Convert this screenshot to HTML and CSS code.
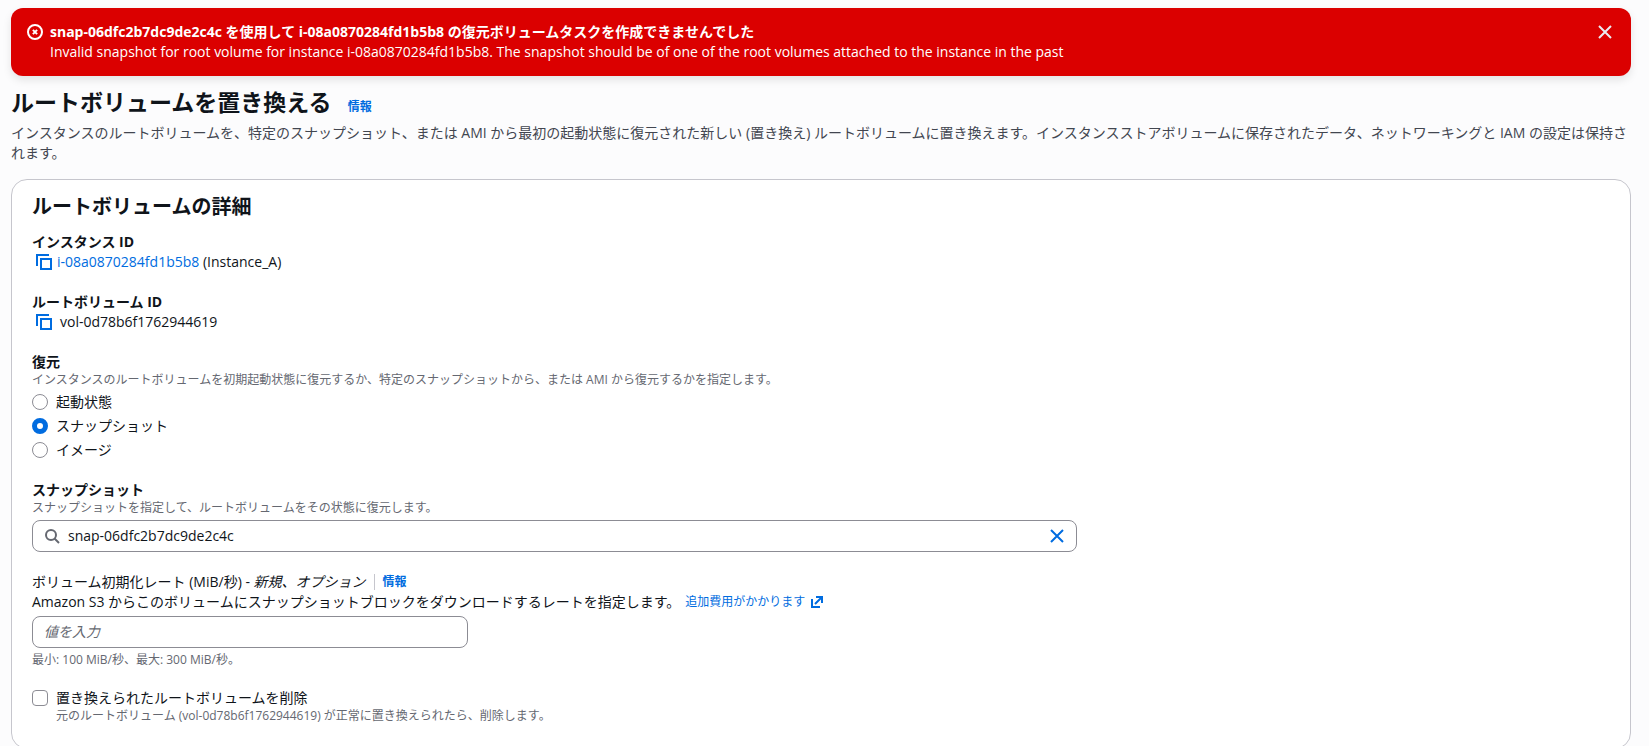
FILE: index.html
```html
<!DOCTYPE html>
<html lang="ja">
<head>
<meta charset="utf-8">
<title>ルートボリュームを置き換える</title>
<link rel="stylesheet" href="styles.css">
</head>
<body>
<main class="page">
  <section class="flash" role="alert">
    <svg class="icon flash-icon" viewBox="0 0 16 16" aria-hidden="true"><circle cx="8" cy="8" r="7"/><path d="m10.1 5.9-4.2 4.2M5.9 5.9l4.2 4.2"/></svg>
    <div class="flash-text">
      <strong class="flash-title">snap-06dfc2b7dc9de2c4c を使用して i-08a0870284fd1b5b8 の復元ボリュームタスクを作成できませんでした</strong>
      <p>Invalid snapshot for root volume for instance i-08a0870284fd1b5b8. The snapshot should be of one of the root volumes attached to the instance in the past</p>
    </div>
    <button class="icon-button flash-close" type="button" aria-label="閉じる"><svg class="icon" viewBox="0 0 16 16"><path d="m2 2 12 12M14 2 2 14"/></svg></button>
  </section>

  <header class="page-header">
    <div class="title-row">
      <h1>ルートボリュームを置き換える</h1>
      <a class="info" href="#">情報</a>
    </div>
    <p>インスタンスのルートボリュームを、特定のスナップショット、または AMI から最初の起動状態に復元された新しい (置き換え) ルートボリュームに置き換えます。インスタンスストアボリュームに保存されたデータ、ネットワーキングと IAM の設定は保持されます。</p>
  </header>

  <form class="card">
    <h2>ルートボリュームの詳細</h2>

    <div class="field">
      <div class="label">インスタンス ID</div>
      <div class="value">
        <button class="icon-button copy" type="button" aria-label="インスタンス ID をコピー"><svg class="icon" viewBox="0 0 16 16"><path d="M15 5H5v10h10V5Z"/><path d="M13 1H1v11"/></svg></button>
        <span><a href="#">i-08a0870284fd1b5b8</a> (Instance_A)</span>
      </div>
    </div>

    <div class="field">
      <div class="label">ルートボリューム ID</div>
      <div class="value value-plain">
        <button class="icon-button copy" type="button" aria-label="ルートボリューム ID をコピー"><svg class="icon" viewBox="0 0 16 16"><path d="M15 5H5v10h10V5Z"/><path d="M13 1H1v11"/></svg></button>
        <span>vol-0d78b6f1762944619</span>
      </div>
    </div>

    <fieldset class="field">
      <legend class="label">復元</legend>
      <p class="hint">インスタンスのルートボリュームを初期起動状態に復元するか、特定のスナップショットから、または AMI から復元するかを指定します。</p>
      <div class="choices">
        <label class="choice"><input type="radio" name="restore">起動状態</label>
        <label class="choice"><input type="radio" name="restore" checked>スナップショット</label>
        <label class="choice"><input type="radio" name="restore">イメージ</label>
      </div>
    </fieldset>

    <div class="field columns">
      <label class="label" for="snapshot">スナップショット</label>
      <p class="hint">スナップショットを指定して、ルートボリュームをその状態に復元します。</p>
      <div class="box">
        <svg class="icon search" viewBox="0 0 16 16" aria-hidden="true"><circle cx="7" cy="7" r="5"/><path d="m15 15-4.5-4.5"/></svg>
        <input id="snapshot" type="text" value="snap-06dfc2b7dc9de2c4c">
        <button class="icon-button clear" type="button" aria-label="クリア"><svg class="icon" viewBox="0 0 16 16"><path d="m2 2 12 12M14 2 2 14"/></svg></button>
      </div>
    </div>

    <div class="field columns">
      <div class="rate-label">
        <label for="rate">ボリューム初期化レート (MiB/秒) - <em>新規、オプション</em></label>
        <a class="info divided" href="#">情報</a>
      </div>
      <div class="rate-note">
        <span>Amazon S3 からこのボリュームにスナップショットブロックをダウンロードするレートを指定します。</span>
        <a class="external" href="#">追加費用がかかります<svg class="icon external-icon" viewBox="0 0 12 12" aria-hidden="true"><path d="M5 1h6v6M4 8l7-7M1 3v8h8"/></svg></a>
      </div>
      <div class="box narrow"><input id="rate" type="text" placeholder="値を入力"></div>
      <p class="hint constraint">最小: 100 MiB/秒、最大: 300 MiB/秒。</p>
    </div>

    <div class="field">
      <label class="choice"><input type="checkbox" aria-describedby="delete-hint">置き換えられたルートボリュームを削除</label>
      <p class="hint indented" id="delete-hint">元のルートボリューム (vol-0d78b6f1762944619) が正常に置き換えられたら、削除します。</p>
    </div>
  </form>
</main>
</body>
</html>
```
FILE: styles.css
```css
*,
*::before {
  box-sizing: border-box;
}

body {
  margin: 0;
  background: #fcfcfd;
  color: #0f141a;
  font: 14px/20px "Open Sans", "Noto Sans CJK JP", sans-serif;
}

h1,
h2,
p {
  margin: 0;
}

a {
  color: #006ce0;
  text-decoration: none;
}

.page {
  height: 100vh;
  padding: 8px 18px 8px 11px;
  overflow-y: auto;
  scrollbar-width: none;
}

.icon {
  display: block;
  flex: none;
  width: 16px;
  height: 16px;
  fill: none;
  stroke: currentColor;
  stroke-width: 2;
}

.icon-button {
  display: block;
  flex: none;
  padding: 0;
  border: 0;
  background: none;
  color: #006ce0;
}

/* Error banner */
.flash {
  display: flex;
  gap: 7px;
  padding: 14px 18px 14px 16px;
  border-radius: 12px;
  background: #db0000;
  box-shadow: 0 4px 8px rgba(0, 7, 22, 0.1);
  color: #fff;
}

.flash-icon {
  margin-top: 2px;
}

.flash-text {
  flex: 1;
}

.flash-title {
  display: block;
}

.flash-close {
  align-self: flex-start;
  margin-top: 2px;
  color: #ebebf0;
}

/* Page title */
.page-header {
  padding: 11px 0 16px;
}

.page-header p {
  margin-top: 6px;
  color: #424650;
}

.title-row {
  display: flex;
  align-items: baseline;
  gap: 16px;
}

h1 {
  font-size: 23px;
  line-height: 30px;
}

h2 {
  font-size: 20px;
  line-height: 24px;
}

.info {
  font-size: 12px;
  line-height: 16px;
  font-weight: 700;
}

/* Details card */
.card {
  padding: 15px 20px 24px;
  border: 1px solid #c6c6cd;
  border-radius: 16px;
  background: #fff;
}

.field {
  margin: 0 0 20px;
  padding: 0;
  border: 0;
}

.field:last-child {
  margin-bottom: 0;
}

h2 + .field {
  margin-top: 13px;
}

.label {
  display: block;
  padding: 0;
  font-weight: 700;
}

.value {
  display: flex;
  align-items: center;
  gap: 5px;
  padding-left: 4px;
}

.value-plain {
  gap: 8px;
}

.hint {
  color: #656871;
  font-size: 12px;
  line-height: 16px;
}

.choices {
  display: grid;
  justify-items: start;
  gap: 4px;
  margin-top: 4px;
}

.choice {
  display: flex;
  align-items: center;
  gap: 8px;
}

.choice input {
  appearance: none;
  flex: none;
  width: 16px;
  height: 16px;
  margin: 0;
  border: 1px solid #8c8c94;
  border-radius: 4px;
  background: #fff;
}

.choice input[type="radio"] {
  border-radius: 50%;
}

.choice input[type="radio"]:checked {
  border: 5px solid #006ce0;
}

.indented {
  padding-left: 24px;
}

/* Fields that span eight of the twelve columns */
.columns {
  width: calc((100% + 20px) * 2 / 3 - 20px);
}

.box {
  display: flex;
  align-items: center;
  gap: 8px;
  height: 32px;
  margin-top: 4px;
  padding: 0 11px;
  border: 1px solid #8c8c94;
  border-radius: 8px;
  background: #fff;
}

.box input {
  flex: 1;
  min-width: 0;
  padding: 0;
  border: 0;
  outline: 0;
  background: none;
  color: inherit;
  font: inherit;
}

.box input::placeholder {
  color: #656871;
  font-style: italic;
}

.search {
  color: #656871;
}

.narrow {
  width: calc(100% * 5 / 12);
}

.rate-label,
.rate-note {
  display: flex;
  align-items: center;
  white-space: nowrap;
}

.divided {
  margin-left: 8px;
  padding-left: 8px;
  border-left: 1px solid #c6c6cd;
}

.external {
  display: flex;
  align-items: center;
  gap: 6px;
  margin-left: 5px;
  font-size: 12px;
}

.external-icon {
  width: 12px;
  height: 12px;
}

.constraint {
  margin-top: 4px;
}
```
